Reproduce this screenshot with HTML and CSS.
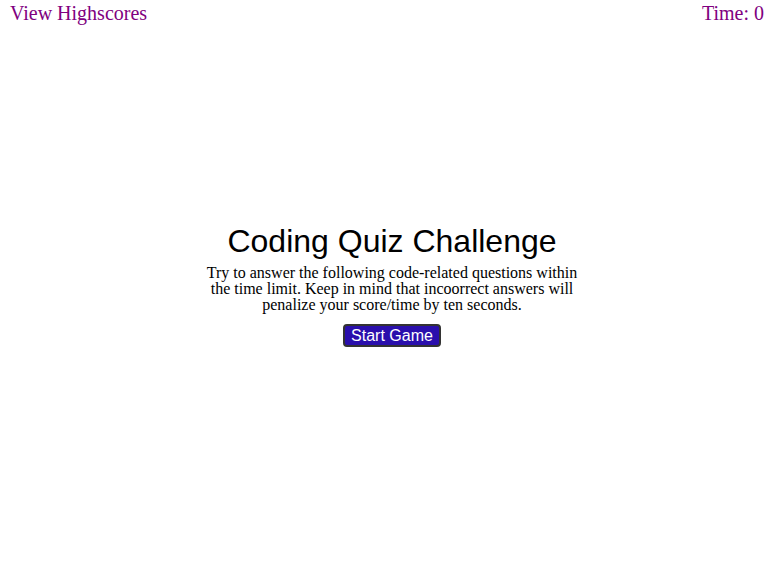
FILE: index.html
```html
<!DOCTYPE html>
<html>
<head>
<meta charset="utf-8">
<link rel="stylesheet" href="styles.css">
</head>
<body>
<div class="page">
  <header class="top">
    <a class="highscores">View Highscores</a>
    <div class="timer">Time: <span>0</span></div>
  </header>
  <main class="intro">
    <h1 class="title">Coding Quiz Challenge</h1>
    <p class="desc">Try to answer the following code-related questions within the time limit. Keep in mind that incoorrect answers will penalize your score/time by ten seconds.</p>
    <button class="start">Start Game</button>
  </main>
</div>
</body>
</html>
```
FILE: styles.css
```css
html, body { margin: 0; padding: 0; background: #fff; }
body { font-family: "Liberation Serif", "Times New Roman", serif; color: #000; }
.page { height: 563px; display: flex; flex-direction: column; }
.top { display: flex; justify-content: space-between; padding: 2px 16px 0 10px; font-size: 20px; color: #800080; line-height: 23px; }
.highscores { color: #800080; cursor: pointer; }
.intro { flex: 1; display: flex; flex-direction: column; align-items: center; justify-content: center; padding: 0 0 18px 4px; }
.title { font-family: "Liberation Sans", Arial, sans-serif; font-weight: normal; font-size: 32px; margin: 0 0 6px; line-height: 35px; }
.desc { width: 380px; text-align: center; font-size: 16px; line-height: 16px; margin: 0 0 11px; }
.start { font-family: "Liberation Sans", Arial, sans-serif; font-size: 16px; color: #fff; background: #2a0fac; border: 2px solid #333; border-radius: 4px; padding: 1px 6px; line-height: 17px; }
```
